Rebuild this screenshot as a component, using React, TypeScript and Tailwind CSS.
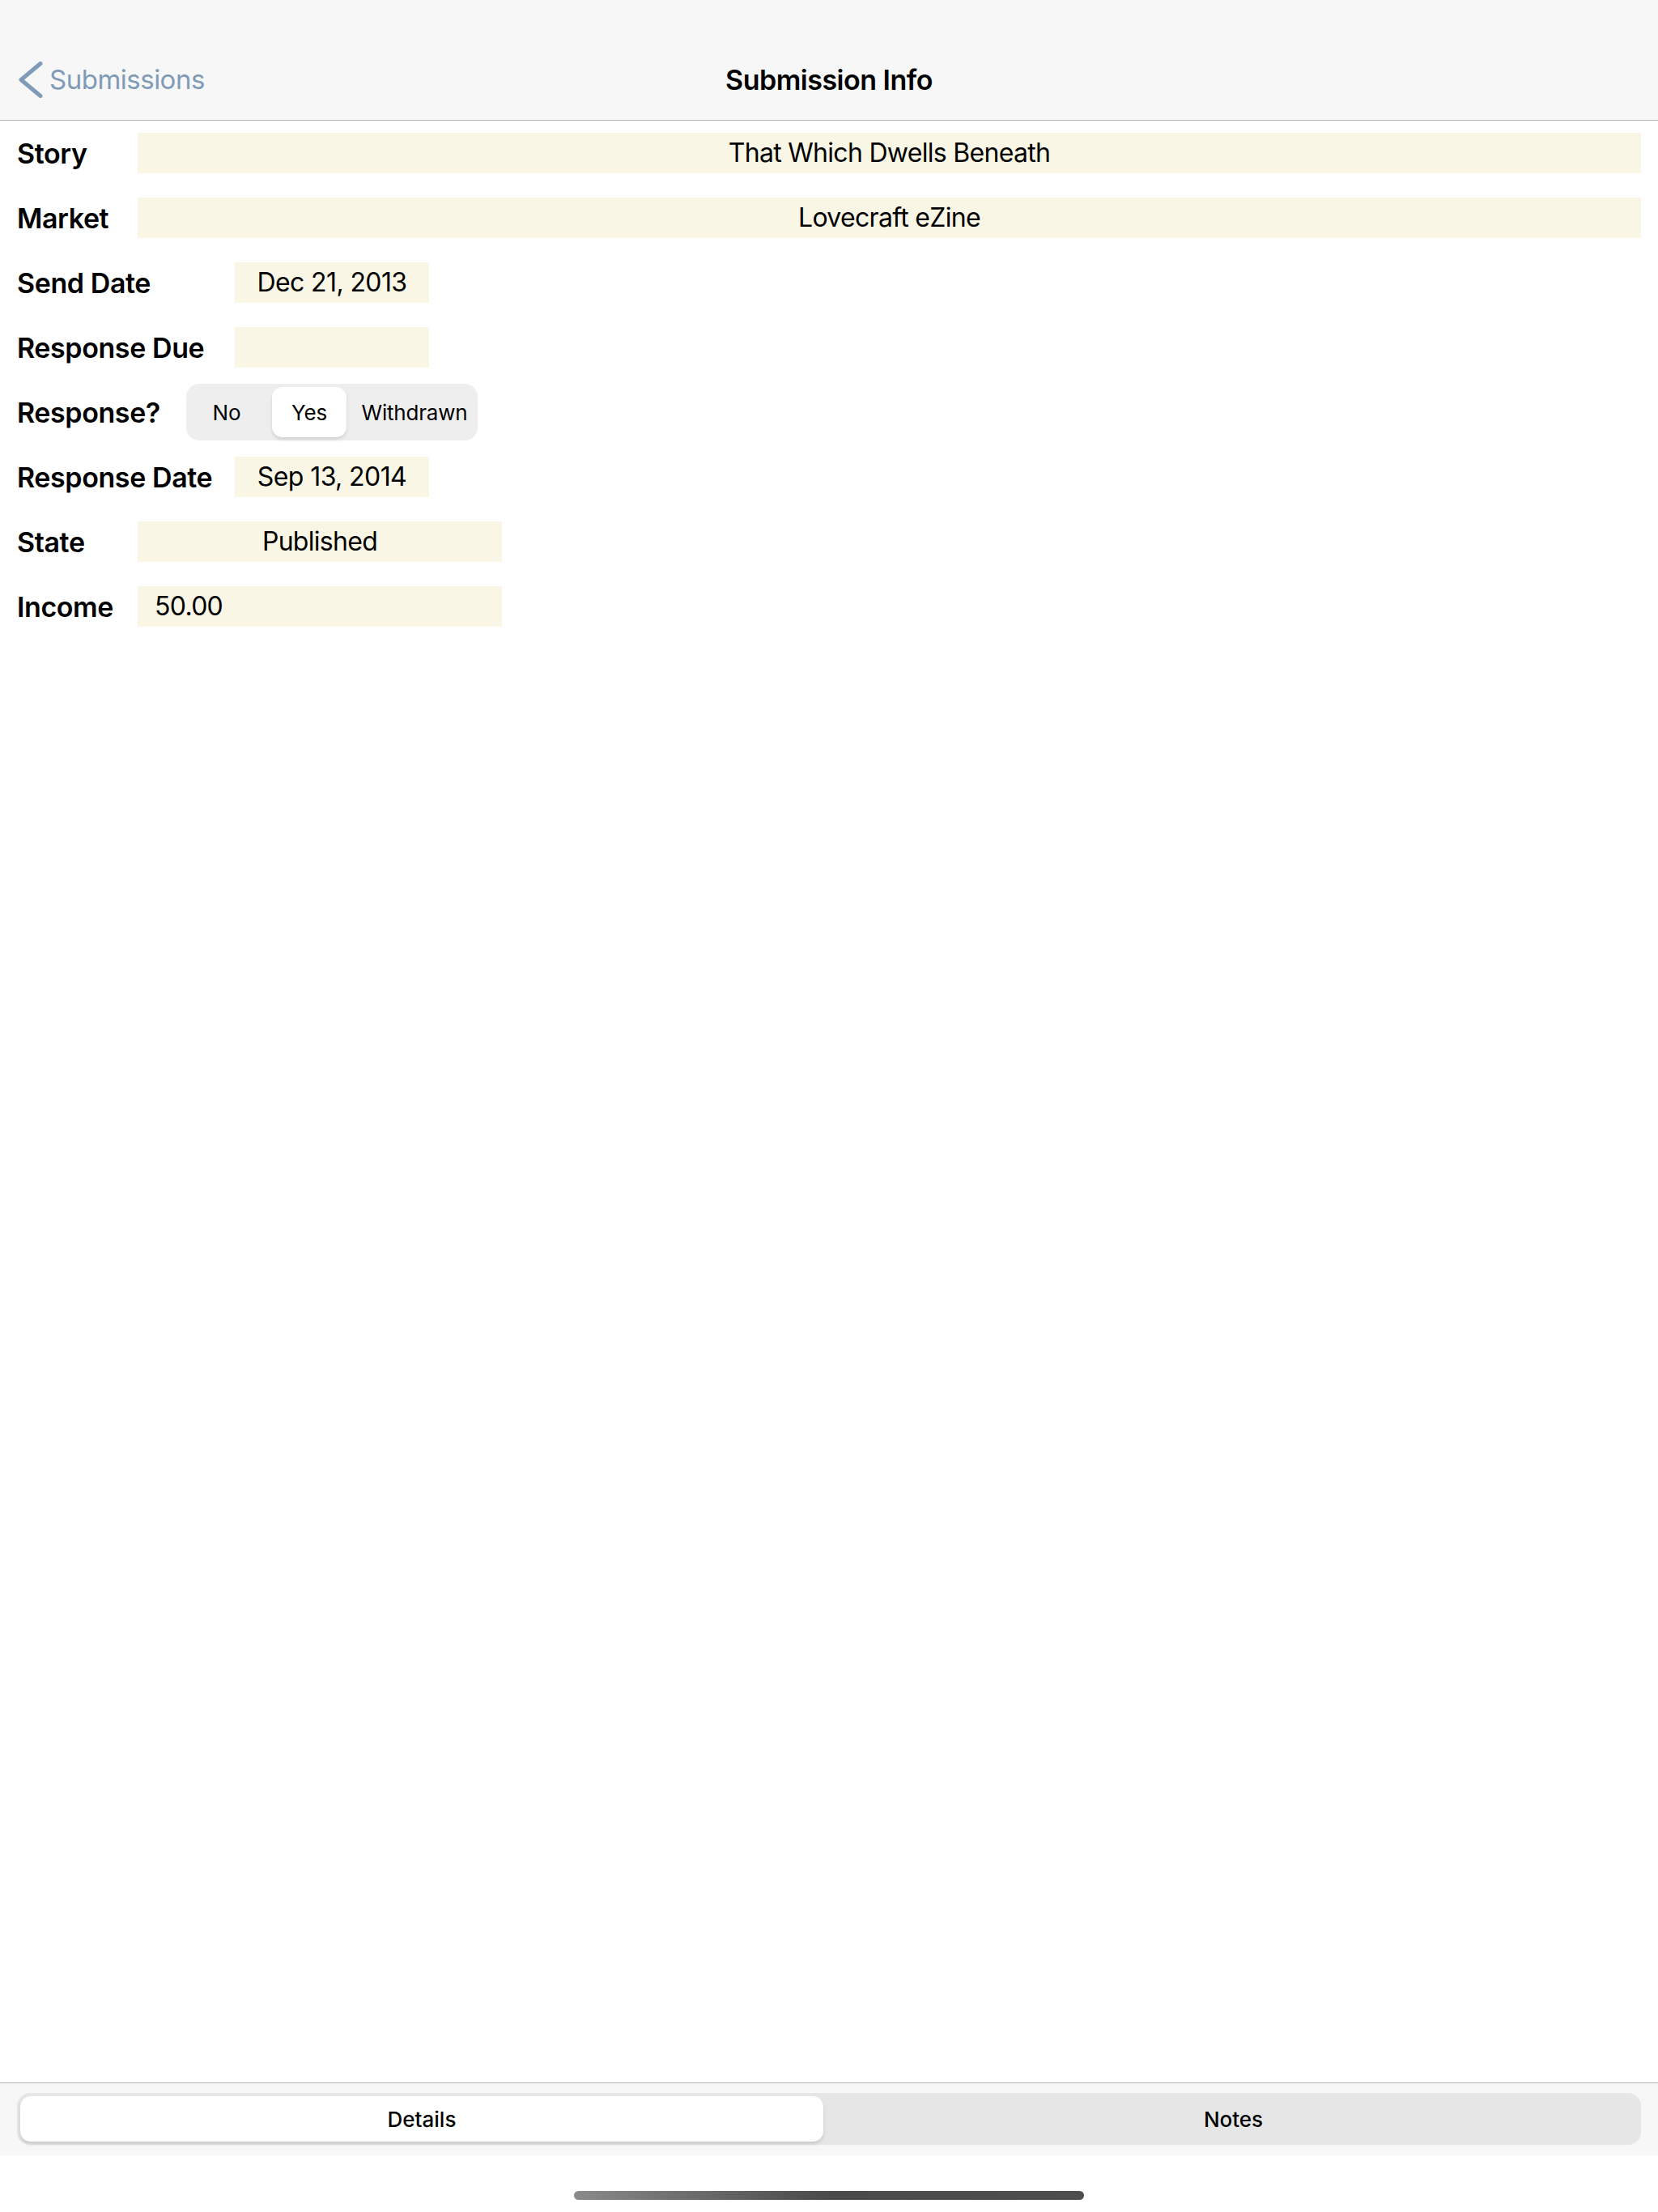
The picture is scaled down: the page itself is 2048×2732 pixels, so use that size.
const font = { fontFamily: "Inter, 'Noto Sans', sans-serif" };

function Label({ children }: { children: React.ReactNode }) {
  return (
    <div className="w-[149px] shrink-0 whitespace-nowrap text-[34px] font-semibold tracking-[-0.4px] text-black">
      {children}
    </div>
  );
}

function DateField({ value }: { value?: string }) {
  return (
    <div className="ml-[120px] flex h-[50px] w-[240px] items-center justify-center bg-[#faf6e6] text-[32px] tracking-[-0.6px] text-black">
      {value}
    </div>
  );
}

export default function App() {
  return (
    <div className="flex h-[2732px] w-[2048px] flex-col bg-white" style={font}>
      {/* nav bar */}
      <div className="h-[149px] shrink-0 border-b border-[#b4b4b4] bg-[#f7f7f7] pt-[73px]">
        <div className="grid h-[41px] grid-cols-[1fr_auto_1fr] items-center">
          <div className="flex items-center pl-[23px]">
            <svg width="30" height="45" viewBox="0 0 30 45" className="shrink-0">
              <path d="M27 2.5 L3 22.5 L27 42.5" fill="none" stroke="#7f9bb8" strokeWidth="5" strokeLinecap="round" strokeLinejoin="round" />
            </svg>
            <span className="ml-[8px] text-[33px] leading-none tracking-[-0.5px] text-[#7f9bb8]">Submissions</span>
          </div>
          <div className="text-[34px] font-semibold tracking-[-0.5px] text-black">Submission Info</div>
          <div />
        </div>
      </div>

      {/* form */}
      <div className="flex flex-1 flex-col pl-[21px] pr-[21px]">
        <div className="flex h-[80px] items-center">
          <Label>Story</Label>
          <div className="flex h-[50px] flex-1 items-center justify-center bg-[#faf6e6] text-[32px] tracking-[-0.7px] text-black">
            That Which Dwells Beneath
          </div>
        </div>
        <div className="flex h-[80px] items-center">
          <Label>Market</Label>
          <div className="flex h-[50px] flex-1 items-center justify-center bg-[#faf6e6] text-[32px] tracking-[-0.7px] text-black">
            Lovecraft eZine
          </div>
        </div>
        <div className="flex h-[80px] items-center">
          <Label>Send Date</Label>
          <DateField value="Dec 21, 2013" />
        </div>
        <div className="flex h-[80px] items-center">
          <Label>Response Due</Label>
          <DateField />
        </div>
        <div className="flex h-[80px] items-center">
          <Label>Response?</Label>
          <div className="ml-[60px] flex h-[70px] w-[360px] gap-[10px] rounded-[16px] bg-[#eeeeef] p-[4px] text-[26px] tracking-[-0.2px] text-black">
            <div className="flex w-[92px] items-center justify-center">No</div>
            <div className="flex w-[92px] items-center justify-center rounded-[13px] bg-white shadow-[0_3px_4px_rgba(0,0,0,0.12)]">Yes</div>
            <div className="flex w-[148px] items-center justify-center">Withdrawn</div>
          </div>
        </div>
        <div className="flex h-[80px] items-center">
          <Label>Response Date</Label>
          <DateField value="Sep 13, 2014" />
        </div>
        <div className="flex h-[80px] items-center">
          <Label>State</Label>
          <div className="flex h-[50px] w-[450px] items-center justify-center bg-[#faf6e6] text-[32px] tracking-[-0.7px] text-black">
            Published
          </div>
        </div>
        <div className="flex h-[80px] items-center">
          <Label>Income</Label>
          <div className="flex h-[50px] w-[450px] items-center bg-[#faf6e6] pl-[21px] text-[32px] tracking-[-0.7px] text-black">
            50.00
          </div>
        </div>
      </div>

      {/* toolbar */}
      <div className="h-[90px] shrink-0 border-t border-[#b4b4b4] bg-[#f7f7f7] px-[21px] pt-[12px]">
        <div className="grid h-[64px] grid-cols-2 rounded-[16px] bg-[#e6e6e6] p-[4px] text-[26px] font-medium text-black">
          <div className="mr-[7px] flex items-center justify-center rounded-[13px] bg-white shadow-[0_3px_4px_rgba(0,0,0,0.13)]">Details</div>
          <div className="flex items-center justify-center">Notes</div>
        </div>
      </div>

      {/* home indicator */}
      <div className="flex h-[70px] shrink-0 justify-center pt-[44px]">
        <div className="h-[11px] w-[630px] rounded-full bg-gradient-to-r from-[#8a8a8a] via-[#4a4a4a] to-[#4e4e4e]" />
      </div>
    </div>
  );
}
